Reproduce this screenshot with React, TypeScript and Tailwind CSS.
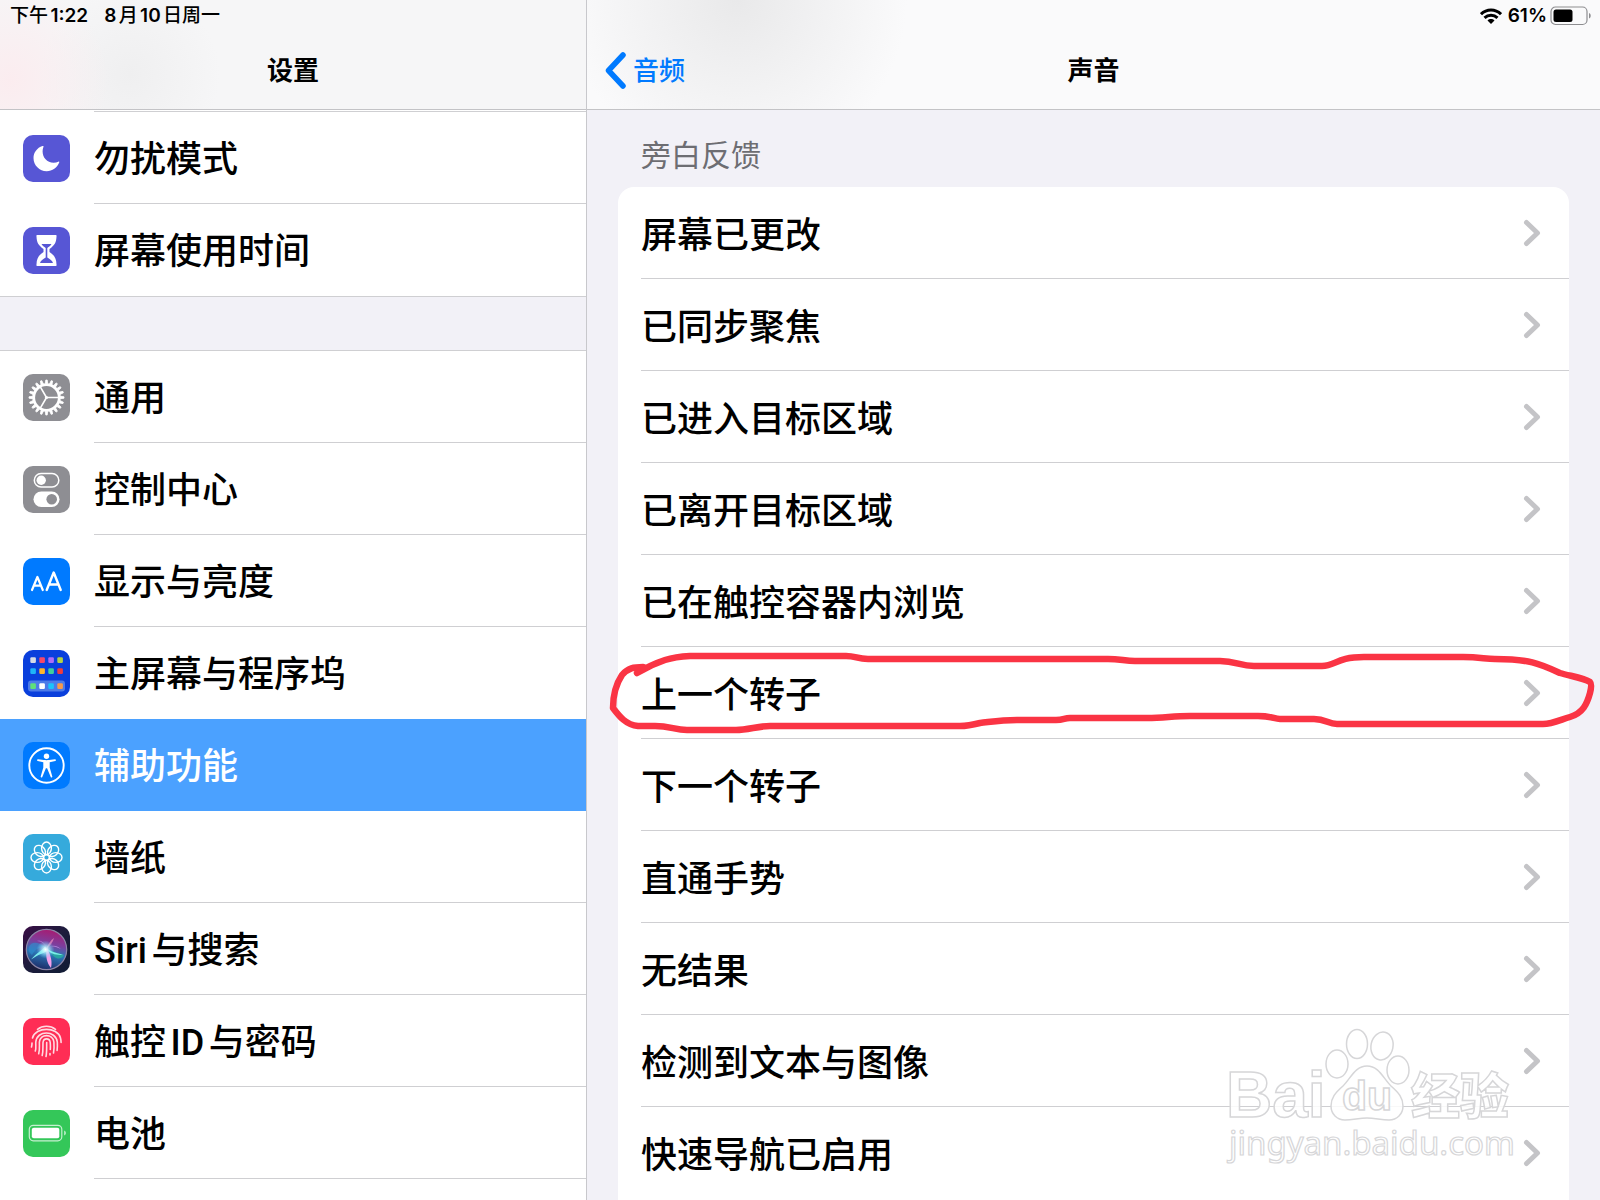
import type { ReactNode } from "react";

const sounds = [
  "屏幕已更改",
  "已同步聚焦",
  "已进入目标区域",
  "已离开目标区域",
  "已在触控容器内浏览",
  "上一个转子",
  "下一个转子",
  "直通手势",
  "无结果",
  "检测到文本与图像",
  "快速导航已启用",
];

const gearTeeth = Array.from({ length: 20 }, (_, i) => i * 18);
const petals = Array.from({ length: 8 }, (_, i) => i * 45);

const appDots = [
  [10, 10, "#d5dbe6"], [19, 10, "#f5486a"], [28, 10, "#b06cf5"], [37, 10, "#b3d345"],
  [10, 21, "#1fb4f7"], [19, 21, "#fdb62a"], [28, 21, "#3fcf9c"], [37, 21, "#f23c3c"],
  [10, 36, "#5fe07a"], [19, 36, "#ffffff"], [28, 36, "#1cc3fa"], [37, 36, "#f79a4b"],
] as const;

function Tile({ color, children }: { color: string; children: ReactNode }) {
  return (
    <svg viewBox="0 0 47 47" className="size-[47px] shrink-0" aria-hidden="true">
      <rect width="47" height="47" rx="10" fill={color} />
      {children}
    </svg>
  );
}

const MoonIcon = () => (
  <Tile color="#5756d5">
    <path
      d="M19.500 11C14 12.800 10.500 17.600 10.500 23c0 7.400 6 13.200 13.200 13.200 5.600 0 10.600-3.600 12.500-8.600.3-.8-.2-1.200-.9-.9-1.400.6-3 1-4.700 1-6.600 0-11-5-11-11.400 0-1.600.3-3.200.9-4.500.3-.7-.3-1.100-1-.8z"
      fill="#fff"
    />
  </Tile>
);

const HourglassIcon = () => (
  <Tile color="#5756d5">
    <path
      d="M14.500 8h18c1 0 1.300.7 1 1.600-.2 6-2 9-7 12.400v3c5 3.400 6.800 6.400 7 12.400.3.900 0 1.600-1 1.600h-18c-1 0-1.300-.7-1-1.600.2-6 2-9 7-12.400v-3c-5-3.400-6.800-6.400-7-12.400-.3-.9 0-1.600 1-1.600z"
      fill="#fff"
    />
    <path d="M18.500 17h10c-1 1.600-2.500 2.800-4.200 4v9.500c2.700 1.800 5 3 5.700 5.500H17c.7-2.500 3-3.700 5.700-5.500V21c-1.700-1.200-3.200-2.400-4.200-4z" fill="#5756d5" />
  </Tile>
);

const GearIcon = () => (
  <Tile color="#8e8e93">
    {gearTeeth.map((deg) => (
      <path key={deg} d="M22.300 9.500l.5-3.500h1.400l.5 3.500z" fill="#fff" stroke="#fff" strokeWidth=".8" transform={`rotate(${deg} 23.500 23.500)`} />
    ))}
    <g fill="none" stroke="#fff">
      <circle cx="23.500" cy="23.500" r="12.800" strokeWidth="2.800" />
      <path d="M23.500 23.500h12M23.500 23.500l-6.200-10.600M23.500 23.500l-6.200 10.600" strokeWidth="1.600" />
    </g>
    <circle cx="23.500" cy="23.500" r="1.600" fill="#fff" />
  </Tile>
);

const TogglesIcon = () => (
  <Tile color="#8e8e93">
    <rect x="11.300" y="7.500" width="24.500" height="13.500" rx="6.750" fill="none" stroke="#fff" strokeWidth="1.500" />
    <circle cx="18.200" cy="14.200" r="4.700" fill="#fff" />
    <rect x="10.500" y="25.500" width="26" height="15.500" rx="7.750" fill="#fff" />
    <circle cx="28.700" cy="33.200" r="5.300" fill="#8e8e93" />
  </Tile>
);

const TextSizeIcon = () => (
  <Tile color="#007aff">
    <g fill="none" stroke="#fff" strokeLinecap="round" strokeLinejoin="round">
      <path d="M9 32l5.400-13 5.400 13M10.800 27.700h7.200" strokeWidth="2.200" />
      <path d="M23.700 32l7-17.500 7 17.500M26 26.500h9.400" strokeWidth="2.400" />
    </g>
  </Tile>
);

const HomeScreenIcon = () => (
  <Tile color="#0a3fdc">
    <rect x="5" y="30.500" width="37" height="11" rx="3" fill="#4c7be8" />
    {appDots.map(([x, y, fill]) => (
      <rect key={`${x}-${y}`} x={x - 2.700} y={y - 2.700} width="5.600" height="5.600" rx="1.200" fill={fill} />
    ))}
  </Tile>
);

const AccessibilityIcon = () => (
  <Tile color="#007aff">
    <circle cx="23.500" cy="23.500" r="17.200" fill="none" stroke="#fff" strokeWidth="1.900" />
    <circle cx="23.500" cy="14.300" r="2.700" fill="#fff" />
    <path
      d="M15 17.300l5.800.7c1.800.2 3.600.2 5.400 0l5.800-.7c1-.1 1.300 1.400.3 1.600l-5.600 1.300v5.400l2.600 8.900c.3 1.100-1.200 1.500-1.600.5l-3.600-8.800h-1.200L19.300 35c-.4 1-1.900.6-1.600-.5l2.600-8.900v-5.400l-5.600-1.300c-1-.2-.7-1.700.3-1.600z"
      fill="#fff"
    />
  </Tile>
);

const WallpaperIcon = () => (
  <Tile color="#35aadc">
    <g fill="none" stroke="#fff" strokeWidth="1.400">
      {petals.map((deg) => (
        <ellipse key={deg} cx="23.500" cy="14.200" rx="4.900" ry="6.200" transform={`rotate(${deg} 23.500 23.500)`} />
      ))}
      <circle cx="23.500" cy="23.500" r="2.800" />
    </g>
  </Tile>
);

const SiriIcon = () => (
  <Tile color="url(#siriBack)">
    <defs>
      <linearGradient id="siriBack" x1="0" y1="0" x2="1" y2="1">
        <stop offset="0" stopColor="#3a0d45" />
        <stop offset=".5" stopColor="#1c1c3c" />
        <stop offset="1" stopColor="#101c34" />
      </linearGradient>
      <linearGradient id="siriOrb" x1=".6" y1="0" x2=".4" y2="1">
        <stop offset="0" stopColor="#a81a70" />
        <stop offset=".35" stopColor="#7c3f9e" />
        <stop offset=".6" stopColor="#2c78b8" />
        <stop offset="1" stopColor="#1c2a66" />
      </linearGradient>
      <radialGradient id="siriGlow">
        <stop offset="0" stopColor="#fff" />
        <stop offset=".4" stopColor="#b8f4ff" stopOpacity=".7" />
        <stop offset="1" stopColor="#6ad8ff" stopOpacity="0" />
      </radialGradient>
    </defs>
    <circle cx="23.500" cy="23.500" r="20.200" fill="url(#siriOrb)" stroke="#8d86a8" strokeWidth="1.200" />
    <path d="M6 21c2-5 8-6 16 0-5 0-10 2-13 8-3-2-4-5-3-8z" fill="#2f8fd0" opacity=".6" />
    <path d="M26 24c6 2 11 4 15 5-3 5-9 6-15-5z" fill="#25c493" opacity=".6" />
    <path d="M8 33.500c5-6 11-9 14-13 4 5 10 6 18 8.500-7 0-11-1-15-4-5 2-10 4-17 8.500z" fill="#7ff2ee" opacity=".95" />
    <path d="M24 21c2 6 6 12 4 21-4-5-6-12-4-21z" fill="#f3a0ea" />
    <path d="M14 15c5 0 8 3 10 7 3-3 8-2 14 1-6-5-10-3-14-1-3-6-6-8-10-7z" fill="#c58fe8" opacity=".8" />
    <path d="M31 12c-3 2-6 6-8 11 4-3 7-7 8-11z" fill="#f08ec2" opacity=".7" />
    <circle cx="22.500" cy="23.500" r="9" fill="url(#siriGlow)" />
  </Tile>
);

const FingerprintIcon = () => (
  <Tile color="#ff2d55">
    <g fill="none" stroke="#ffdbe2" strokeWidth="1.600" strokeLinecap="round">
      <path d="M14.500 11.300c5-4 13-4 18 0" />
      <path d="M9.500 20c3-11.500 25-11.500 28 0 .4 1.600.6 3 .6 4.500" />
      <path d="M9 25c0 2-.2 3-.5 4M12.300 33c1-3 .3-6 .5-9 1-12 20-12 21.500 0 .2 3 .2 5-.2 8.500" />
      <path d="M15.700 35.800c1.200-4 .6-7.800.7-11.800.8-8.500 13.500-8.500 14.500 0 .3 4 .2 7.500-.4 11" />
      <path d="M19.200 37.500c1.100-4.500.6-9 .8-13 .5-4.800 6.700-4.800 7.200 0 .4 4 .2 4 .1 7M27 35.500v1.500" />
      <path d="M23 38.500c.9-4.500.6-9 .7-14" />
    </g>
  </Tile>
);

const BatteryIcon = () => (
  <Tile color="#34c759">
    <rect x="6.300" y="15.300" width="32.500" height="15.500" rx="4" fill="none" stroke="#c5f0d0" strokeWidth="1.200" />
    <rect x="8.800" y="17.800" width="27.500" height="10.500" rx="2" fill="#fff" />
    <path d="M41.200 20.500c2.200.7 2.200 4.300 0 5z" fill="#c5f0d0" />
  </Tile>
);

type Item = { label: string; Icon: () => ReactNode; active?: boolean };

const groups: Item[][] = [
  [
    { label: "勿扰模式", Icon: MoonIcon },
    { label: "屏幕使用时间", Icon: HourglassIcon },
  ],
  [
    { label: "通用", Icon: GearIcon },
    { label: "控制中心", Icon: TogglesIcon },
    { label: "显示与亮度", Icon: TextSizeIcon },
    { label: "主屏幕与程序坞", Icon: HomeScreenIcon },
    { label: "辅助功能", Icon: AccessibilityIcon, active: true },
    { label: "墙纸", Icon: WallpaperIcon },
    { label: "Siri与搜索", Icon: SiriIcon },
    { label: "触控ID与密码", Icon: FingerprintIcon },
    { label: "电池", Icon: BatteryIcon },
  ],
];

function SidebarRow({ item, divider }: { item: Item; divider: boolean }) {
  const { label, Icon, active } = item;
  return (
    <li>
      <a
        href="#"
        aria-current={active ? "page" : undefined}
        className={`flex h-[92px] items-center gap-6 pl-[23px] ${active ? "bg-[#4ba1ff] text-white" : "text-black"}`}
      >
        <Icon />
        <span className={`flex h-full flex-1 items-center border-b pt-1 ${divider ? "border-[#cfcfd2]" : "border-transparent"}`}>
          {label}
        </span>
      </a>
    </li>
  );
}

function Sidebar() {
  return (
    <aside className="flex w-[587px] shrink-0 flex-col border-r border-[#c8c8cc] bg-white">
      <header className="flex h-[110px] shrink-0 flex-col border-b border-[#c3c3c6] bg-[#f6f6f7] bg-[radial-gradient(circle_at_10px_80px,#fbecef_0,transparent_100px),radial-gradient(circle_at_130px_75px,#efeff0_0,transparent_90px)]">
        <div className="flex h-8 items-center gap-4 pl-[10px] text-[19px] font-medium">
          <span>下午<b className="font-semibold">1:22</b></span>
          <span><b className="font-semibold">8</b>月<b className="font-semibold">10</b>日周一</span>
        </div>
        <h1 className="flex h-[76px] items-center justify-center text-[26px] font-bold">设置</h1>
      </header>
      <nav className="pt-px">
        <div className="ml-[94px] h-px bg-[#cfcfd2]" />
        {groups.map((items, g) => (
          <div key={g}>
            {g > 0 && <div className="h-[55px] border-y border-[#cfcfd2] bg-[#f2f1f7]" />}
            <ul className="font-[Roboto,'Noto_Sans_CJK_SC',sans-serif] text-[36px] font-medium">
              {items.map((item, i) => (
                <SidebarRow
                  key={item.label}
                  item={item}
                  divider={!item.active && !items[i + 1]?.active && (g > 0 || i < items.length - 1)}
                />
              ))}
            </ul>
          </div>
        ))}
      </nav>
    </aside>
  );
}

function StatusIcons() {
  return (
    <div className="flex h-8 items-center justify-end gap-[6px] pr-2 text-[19px] font-semibold">
      <svg viewBox="0 0 22 17" className="h-[17px] w-[22px]" aria-hidden="true">
        <g fill="none" stroke="#000" strokeWidth="3">
          <path d="M1 6.200c5.700-5.500 14.300-5.500 20 0" />
          <path d="M4.500 9.900c3.700-3.600 9.300-3.600 13 0" />
        </g>
        <path d="M7.500 12.500c2-1.900 5-1.900 7 0L11 16z" fill="#000" />
      </svg>
      <div className="flex items-center gap-[3px]">
        <span>61%</span>
        <svg viewBox="0 0 42 20" className="h-5 w-[42px]" aria-hidden="true">
          <rect x="1" y="1" width="36" height="17.500" rx="4.500" fill="none" stroke="#8d8d90" strokeWidth="1.200" />
          <rect x="3.500" y="3.500" width="19" height="12.500" rx="2.500" fill="#000" />
          <path d="M39 7c2.300.8 2.300 4.700 0 5.500z" fill="#8d8d90" />
        </svg>
      </div>
    </div>
  );
}

// Hand-drawn loop round the highlighted row
function MarkerLoop() {
  return (
    <svg
      viewBox="608 647 992 92"
      preserveAspectRatio="none"
      className="pointer-events-none absolute -left-[10px] top-0 h-[92px] w-[calc(100%+41px)]"
      aria-hidden="true"
    >
      <path
        d="M637 673C647 667 656 663 665 660C673 657.500 681 656.500 690 656H846C856 656 857 659 868 659H1108C1120 659 1125 661 1135 661H1220C1236 661 1240 666 1254 666H1322C1336 666 1336 657 1364 657H1463C1480 657 1485 659 1495 659C1530 659 1540 664 1560 673C1570 676 1584 678 1590 682C1592 684 1591 689 1590 693C1587 704 1583 713 1570 717C1560 720 1552 724 1543 724H1337C1328 724 1326 719 1314 719H1280C1274 719 1272 716 1258 716H1190C1172 716 1165 718 1147 718H1070C1064 718 1064 720 1056 720H1017C1000 720 990 722 980 723C972 725 968 726 960 726H770C758 726 748 730 736 730H687C675 730 670 726 655 726H638C626 725 619 716 613 708C613 696 616 684 622 675C628 668 634 667 643 667"
        fill="none"
        stroke="#fa3444"
        strokeWidth="6.500"
        strokeLinecap="round"
        strokeLinejoin="round"
      />
    </svg>
  );
}

function SoundRow({ label, marked }: { label: string; marked: boolean }) {
  return (
    <li className="group relative pl-[23px]">
      <a href="#" className="flex h-[92px] items-center justify-between border-b border-[#cfcfd2] pr-7 group-last:border-transparent">
        <span className="pt-1">{label}</span>
        <svg viewBox="0 0 18 28" className="h-7 w-[18px]" aria-hidden="true">
          <path d="M3.500 3.500L14.500 14 3.500 24.500" fill="none" stroke="#c4c4c7" strokeWidth="5" strokeLinecap="round" strokeLinejoin="round" />
        </svg>
      </a>
      {marked && <MarkerLoop />}
    </li>
  );
}

function Watermark() {
  return (
    <svg viewBox="0 0 300 150" className="pointer-events-none absolute right-[80px] bottom-[26px] h-[150px] w-[300px]" aria-hidden="true">
      <g fill="#fff" fillOpacity=".85" stroke="#d6d6d8" strokeWidth="1.500">
        <text x="6" y="93" fontSize="64" fontWeight="700" fontFamily="Liberation Sans, sans-serif">Bai</text>
        <ellipse cx="117" cy="40" rx="11" ry="14" />
        <ellipse cx="137" cy="20" rx="10.500" ry="14.500" />
        <ellipse cx="162" cy="22" rx="11" ry="14" transform="rotate(12 162 22)" />
        <ellipse cx="178" cy="46" rx="11" ry="14" />
        <path d="M147 42c12 0 16 12 24 20 8 7 12 12 12 20 0 8-6 14-14 14-8 0-14-2-22-2s-14 2-22 2c-8 0-14-6-14-14 0-8 4-13 12-20 8-8 12-20 24-20z" />
        <text x="122" y="86" fontSize="41" fontWeight="700" fontFamily="Liberation Sans, sans-serif">du</text>
        <text x="191" y="90" fontSize="49" fontWeight="900" fontFamily="Noto Sans CJK SC, sans-serif">经验</text>
        <text x="9" y="131" fontSize="33" strokeWidth="1.200" fontFamily="Noto Sans, sans-serif">jingyan.baidu.com</text>
      </g>
    </svg>
  );
}

export default function App() {
  return (
    <div className="relative flex h-screen overflow-hidden bg-[#f2f1f7] font-[Inter,'Noto_Sans_CJK_SC',sans-serif] text-black [text-autospace:normal]">
      <Sidebar />
      <main className="flex min-w-0 flex-1 flex-col">
        <header className="h-[110px] shrink-0 border-b border-[#c3c3c6] bg-[#fafafb] bg-[radial-gradient(circle_at_150px_0px,#e9e9ea_0,transparent_170px)]">
          <StatusIcons />
          <div className="grid h-[76px] grid-cols-[1fr_auto_1fr] items-center px-[18px] text-[26px]">
            <button type="button" className="flex items-center gap-[7px] text-[#007aff]">
              <svg viewBox="0 0 21 37" className="h-[37px] w-[21px]" aria-hidden="true">
                <path d="M18 3L3.500 18.500 18 34" fill="none" stroke="#007aff" strokeWidth="5.500" strokeLinecap="round" strokeLinejoin="round" />
              </svg>
              <span className="font-medium">音频</span>
            </button>
            <h2 className="font-bold">声音</h2>
          </div>
        </header>
        <section className="flex flex-1 flex-col px-[31px]">
          <h3 className="flex h-[77px] shrink-0 items-center pt-[14px] pl-[23px] text-[30px] text-[#6d6d72]">旁白反馈</h3>
          <ul className="flex-1 rounded-t-2xl bg-white text-[36px] font-medium">
            {sounds.map((label) => (
              <SoundRow key={label} label={label} marked={label === "上一个转子"} />
            ))}
          </ul>
        </section>
      </main>
      <Watermark />
    </div>
  );
}
